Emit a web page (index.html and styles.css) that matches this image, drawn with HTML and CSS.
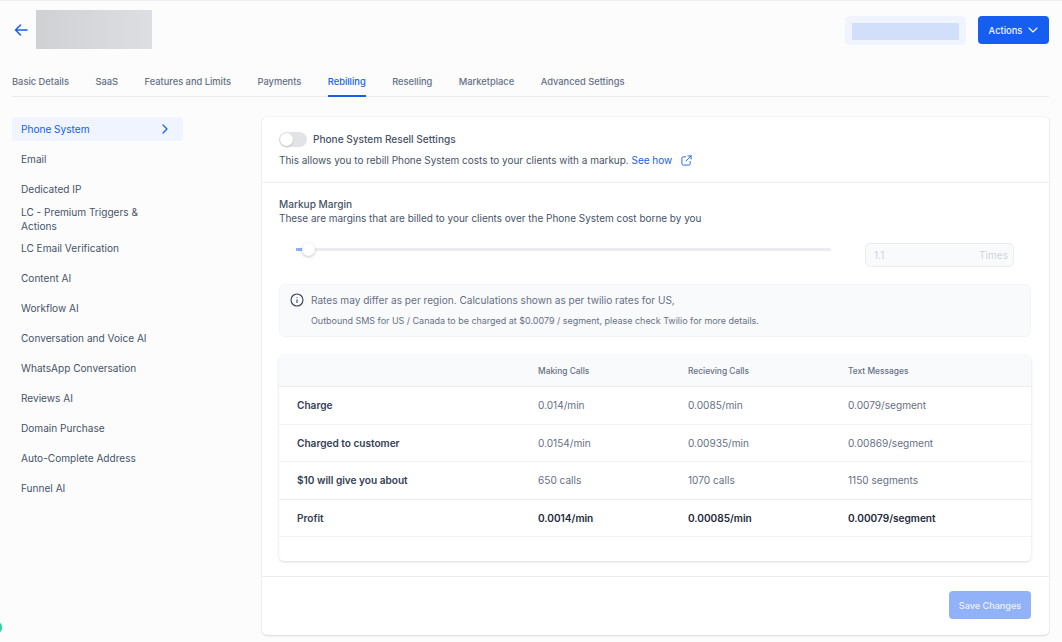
FILE: index.html
```html
<!DOCTYPE html>
<html lang="en">
<head>
  <meta charset="UTF-8">
  <meta name="viewport" content="width=device-width, initial-scale=1.0">
  <title>Rebilling</title>
  <link rel="stylesheet" href="styles.css">
</head>
<body>
  <div class="page">
    <header class="top-bar">
      <div class="top-left">
        <svg class="back-icon" viewBox="0 0 14 14" width="14" height="14" fill="none" stroke="#155eef" stroke-width="1.5" stroke-linecap="round" stroke-linejoin="round"><path d="M13 7H1.500M6.500 2 1.500 7l5 5"/></svg>
        <div class="name-block"></div>
      </div>
      <div class="top-right">
        <div class="id-pill"><div class="id-pill-inner"></div></div>
        <button class="actions-btn">Actions
          <svg viewBox="0 0 10 6" width="10" height="6" fill="none" stroke="#fff" stroke-width="1.1" stroke-linecap="round" stroke-linejoin="round"><path d="M1 1l4 4 4-4"/></svg>
        </button>
      </div>
    </header>

    <nav class="tabs">
      <a class="tab">Basic Details</a>
      <a class="tab">SaaS</a>
      <a class="tab">Features and Limits</a>
      <a class="tab">Payments</a>
      <a class="tab active">Rebilling</a>
      <a class="tab">Reselling</a>
      <a class="tab">Marketplace</a>
      <a class="tab">Advanced Settings</a>
    </nav>

    <div class="content">
      <aside class="side-nav">
        <a class="side-item active">Phone System
          <svg viewBox="0 0 6 10" width="6" height="10" fill="none" stroke="#155eef" stroke-width="1.2" stroke-linecap="round" stroke-linejoin="round"><path d="M1 1l4 4-4 4"/></svg>
        </a>
        <a class="side-item">Email</a>
        <a class="side-item">Dedicated IP</a>
        <a class="side-item double">LC - Premium Triggers &amp; Actions</a>
        <a class="side-item">LC Email Verification</a>
        <a class="side-item">Content AI</a>
        <a class="side-item">Workflow AI</a>
        <a class="side-item">Conversation and Voice AI</a>
        <a class="side-item">WhatsApp Conversation</a>
        <a class="side-item">Reviews AI</a>
        <a class="side-item">Domain Purchase</a>
        <a class="side-item">Auto-Complete Address</a>
        <a class="side-item">Funnel AI</a>
      </aside>

      <main class="card">
        <section class="card-head">
          <div class="toggle-row">
            <span class="toggle"><span class="knob"></span></span>
            <span class="toggle-label">Phone System Resell Settings</span>
          </div>
          <p class="head-text">This allows you to rebill Phone System costs to your clients with a markup. <a class="link">See how</a>
            <svg class="link-icon" viewBox="0 0 12 12" width="11" height="11" fill="none" stroke="#155eef" stroke-width="1" stroke-linecap="round" stroke-linejoin="round"><path d="M5 2H2.500A1.500 1.500 0 0 0 1 3.500v6A1.500 1.500 0 0 0 2.500 11h6A1.500 1.500 0 0 0 10 9.500V7M7.500 1H11v3.500M11 1 5.500 6.500"/></svg>
          </p>
        </section>

        <section class="card-body">
          <h3 class="margin-title">Markup Margin</h3>
          <p class="margin-text">These are margins that are billed to your clients over the Phone System cost borne by you</p>

          <div class="slider-row">
            <div class="slider">
              <span class="slider-fill"></span>
              <span class="slider-knob"></span>
            </div>
            <div class="times-input"><span>1.1</span><span>Times</span></div>
          </div>

          <div class="notice">
            <svg class="info-icon" viewBox="0 0 14 14" width="14" height="14" fill="none" stroke="#344054" stroke-width="1.1" stroke-linecap="round"><circle cx="7" cy="7" r="6"/><path d="M7 9.500V6.800M7 4.500h.01"/></svg>
            <div>
              <p class="notice-main">Rates may differ as per region. Calculations shown as per twilio rates for US,</p>
              <p class="notice-sub">Outbound SMS for US / Canada to be charged at $0.0079 / segment, please check Twilio for more details.</p>
            </div>
          </div>

          <div class="rate-table">
            <div class="rate-row rate-head">
              <div></div><div>Making Calls</div><div>Recieving Calls</div><div>Text Messages</div>
            </div>
            <div class="rate-row">
              <div class="row-name">Charge</div><div>0.014/min</div><div>0.0085/min</div><div>0.0079/segment</div>
            </div>
            <div class="rate-row">
              <div class="row-name">Charged to customer</div><div>0.0154/min</div><div>0.00935/min</div><div>0.00869/segment</div>
            </div>
            <div class="rate-row dark-line">
              <div class="row-name">$10 will give you about</div><div>650 calls</div><div>1070 calls</div><div>1150 segments</div>
            </div>
            <div class="rate-row profit">
              <div class="row-name">Profit</div><div>0.0014/min</div><div>0.00085/min</div><div>0.00079/segment</div>
            </div>
            <div class="rate-foot"></div>
          </div>
        </section>

        <footer class="card-foot">
          <button class="save-btn">Save Changes</button>
        </footer>
      </main>
    </div>
  </div>
  <span class="corner-dot"></span>
</body>
</html>
```

FILE: styles.css
```css
* {
  margin: 0;
  padding: 0;
  box-sizing: border-box;
}

body {
  font-family: Inter, "Liberation Sans", sans-serif;
  background-color: #fcfcfd;
  color: #344054;
  font-size: 10.08px;
  height: 642px;
  overflow: hidden;
  border-top: 1px solid #f0f0f2;
}

.page {
  padding: 9px 13px 0 12px;
}

/* Top bar */
.top-bar {
  display: flex;
  justify-content: space-between;
  align-items: flex-start;
  height: 50px;
}

.top-left {
  display: flex;
  align-items: center;
  gap: 8px;
  padding-left: 2px;
}

.back-icon {
  display: block;
}

.name-block {
  width: 116px;
  height: 39px;
  background: linear-gradient(90deg, #d0d1d5, #dddee2);
}

.top-right {
  display: flex;
  gap: 12px;
  padding-top: 6px;
}

.id-pill {
  width: 121px;
  height: 29px;
  padding: 7px;
  background-color: #f0f4ff;
  border-radius: 5px;
}

.id-pill-inner {
  height: 17px;
  background-color: #d1dffb;
}

.actions-btn {
  display: flex;
  align-items: center;
  justify-content: center;
  gap: 6px;
  width: 71px;
  height: 28px;
  font-family: inherit;
  font-size: 9.36px;
  font-weight: 500;
  color: #f2f6ff;
  background-color: #155eef;
  border: none;
  border-radius: 4px;
}

/* Tabs */
.tabs {
  display: flex;
  gap: 26.5px;
  height: 37px;
  padding-top: 15px;
  border-bottom: 1px solid #eaecf0;
}

.tab {
  height: 22px;
  font-size: 9.3px;
  font-weight: 500;
  line-height: 14px;
  color: #667085;
}

.tab.active {
  color: #155eef;
  border-bottom: 2px solid #155eef;
}

/* Body */
.content {
  display: flex;
  padding-top: 20px;
}

.side-nav {
  flex: 0 0 171px;
  margin-right: 79px;
}

.side-item {
  display: flex;
  align-items: center;
  justify-content: space-between;
  height: 24px;
  margin-bottom: 6px;
  padding: 0 15px 0 9px;
  color: #475467;
  border-radius: 4px;
}

.side-item.active {
  color: #155eef;
  background-color: #eff4ff;
}

.side-item.double {
  margin-bottom: 5px;
  line-height: 14px;
  padding-right: 30px;
}

.card {
  flex: 0 0 787px;
  height: 518px;
  display: flex;
  flex-direction: column;
  background-color: #fff;
  border-radius: 5px;
  box-shadow: 0 1px 2px rgba(16, 24, 40, 0.12), 0 0 0 1px rgba(16, 24, 40, 0.03);
}

.card-head {
  height: 66px;
  padding: 14px 17px 0;
  border-bottom: 1px solid #eaecf0;
}

.toggle-row {
  display: flex;
  align-items: center;
  gap: 6px;
  height: 16px;
}

.toggle {
  display: block;
  width: 28px;
  height: 15px;
  padding: 1px;
  background-color: #e2e3e6;
  border-radius: 8px;
}

.knob {
  display: block;
  width: 13px;
  height: 13px;
  background-color: #fff;
  border-radius: 50%;
  box-shadow: 0 1px 2px rgba(16, 24, 40, 0.2);
}

.toggle-label {
  font-weight: 500;
  color: #475467;
}

.head-text {
  margin-top: 6px;
  font-size: 9.96px;
  line-height: 14px;
  color: #475467;
}

.link {
  color: #155eef;
}

.link-icon {
  margin-left: 6px;
  vertical-align: -2px;
}

.card-body {
  flex: 1;
  padding: 14px 18px 0 17px;
}

.margin-title {
  font-size: 10.08px;
  font-weight: 500;
  line-height: 14px;
  color: #475467;
}

.margin-text {
  font-size: 9.96px;
  line-height: 14px;
  color: #475467;
}

.slider-row {
  display: flex;
  align-items: flex-start;
  margin-top: 18px;
  padding: 0 17px;
}

.slider {
  position: relative;
  width: 535px;
  height: 3px;
  margin: 5px 34px 0 0;
  background-color: #eaecf0;
  border-radius: 2px;
}

.slider-fill {
  position: absolute;
  left: 0;
  top: 0;
  width: 8px;
  height: 3px;
  background-color: #8fb0f7;
}

.slider-knob {
  position: absolute;
  left: 6px;
  top: -5px;
  width: 13px;
  height: 13px;
  background-color: #fff;
  border-radius: 50%;
  box-shadow: 0 1px 3px rgba(16, 24, 40, 0.25);
}

.times-input {
  display: flex;
  justify-content: space-between;
  align-items: center;
  width: 149px;
  height: 24px;
  padding: 0 5px 0 8px;
  color: #d0d5dd;
  background-color: #f9fafb;
  border: 1px solid #eaecf0;
  border-radius: 5px;
}

.notice {
  display: flex;
  gap: 7px;
  height: 53px;
  margin-top: 17px;
  padding: 8px 10px;
  background-color: #f9fafb;
  border: 1px solid #f2f4f7;
  border-radius: 6px;
}

.info-icon {
  flex: none;
}

.notice-main {
  line-height: 14px;
  color: #667085;
}

.notice-sub {
  margin-top: 8px;
  font-size: 8.96px;
  line-height: 12px;
  color: #667085;
}

.rate-table {
  margin-top: 18px;
  height: 206px;
  border-radius: 5px;
  overflow: hidden;
  box-shadow: 0 1px 3px rgba(16, 24, 40, 0.16);
}

.rate-row {
  display: grid;
  grid-template-columns: 259px 150px 160px 1fr;
  align-items: center;
  height: 37.500px;
  border-bottom: 1px solid #f2f4f7;
  color: #667085;
}

.rate-row > .row-name {
  padding-left: 18px;
  font-weight: 600;
  color: #344054;
}

.rate-head {
  height: 32px;
  padding-top: 1px;
  font-size: 8.4px;
  font-weight: 500;
  background-color: #f9fafb;
  border-bottom: 1px solid #eaecf0;
}

.dark-line {
  border-bottom: 1px solid #eaecf0;
}

.profit {
  font-weight: 600;
  color: #1d2939;
}

.card-foot {
  display: flex;
  justify-content: flex-end;
  align-items: flex-start;
  height: 59px;
  padding: 14px 18px 0;
  border-top: 1px solid #eaecf0;
}

.save-btn {
  width: 82px;
  height: 28px;
  font-family: inherit;
  font-size: 9.1px;
  font-weight: 500;
  color: #eef3ff;
  background-color: #91b1f8;
  border: none;
  border-radius: 4px;
}

/* Clipped widget at the bottom left edge */
.corner-dot {
  position: absolute;
  left: -3px;
  top: 623px;
  width: 5px;
  height: 9px;
  background-color: #2dd4a7;
  border-radius: 50%;
}
```
